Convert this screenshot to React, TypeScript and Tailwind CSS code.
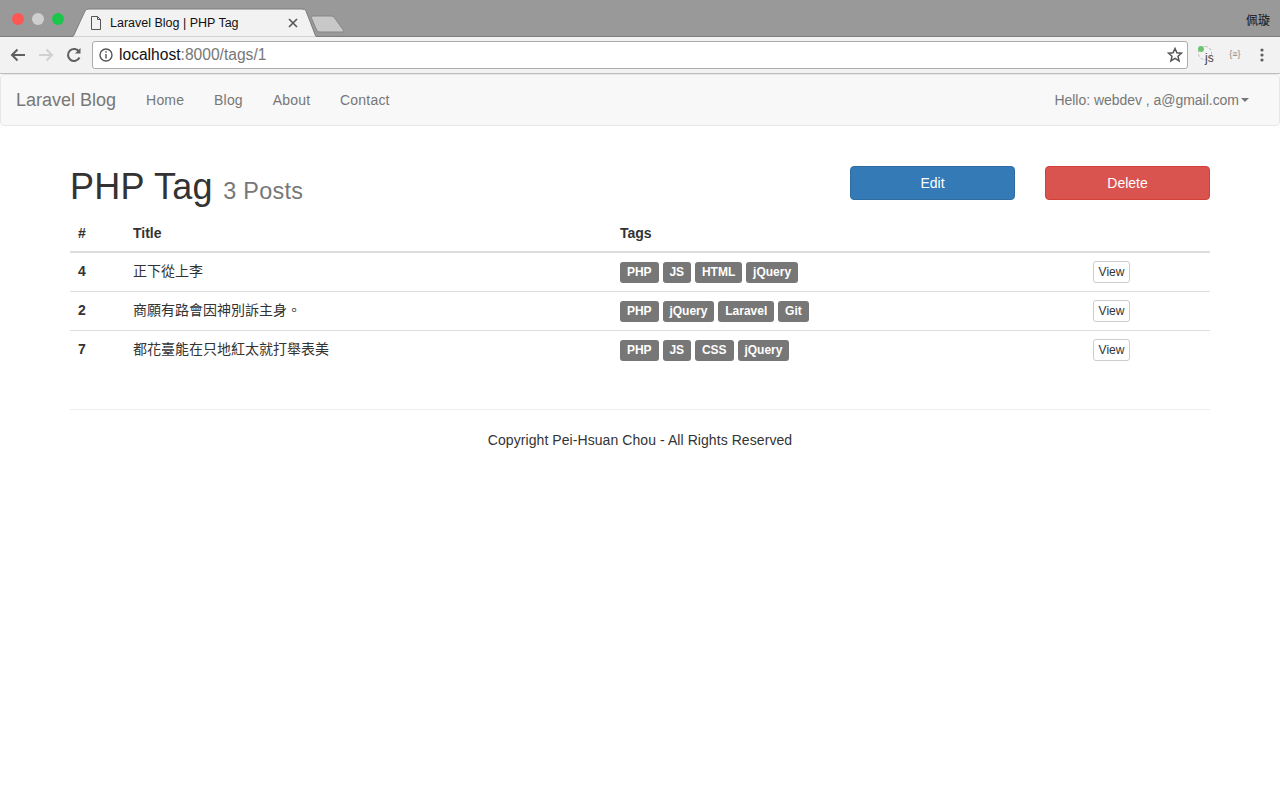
const rows = [
  { id: 4, title: "正下從上李", tags: ["PHP", "JS", "HTML", "jQuery"] },
  { id: 2, title: "商願有路會因神別訴主身。", tags: ["PHP", "jQuery", "Laravel", "Git"] },
  { id: 7, title: "都花臺能在只地紅太就打舉表美", tags: ["PHP", "JS", "CSS", "jQuery"] },
];

function BrowserChrome() {
  return (
    <div className="font-['Liberation_Sans',sans-serif]">
      {/* tab strip */}
      <div className="h-[37px] bg-[#999999] border-b border-[#7d7d7d] flex items-start relative">
        <div className="flex gap-[8px] pl-[12px] pt-[13px]">
          <div className="w-[12px] h-[12px] rounded-full bg-[#fc5753]" />
          <div className="w-[12px] h-[12px] rounded-full bg-[#cfcfcf]" />
          <div className="w-[12px] h-[12px] rounded-full bg-[#1bc64b]" />
        </div>
        <svg className="absolute left-[70px] top-[8px]" width="280" height="30" viewBox="0 0 280 30">
          <path d="M3 29 L15 3 Q16 1 19 1 L232 1 Q235 1 236 3 L246 29 Z" fill="#f2f2f2" stroke="#7d7d7d" />
          <path d="M3 29.5 H246" stroke="#f2f2f2" strokeWidth="2" />
          <path d="M241 9 Q241 8 243 8 L261 8 Q263 8 264 9 L274 23 Q274 24 272 24 L250 24 Q248 24 247 23 Z" fill="#c8c8c8" stroke="#858585" />
        </svg>
        <svg className="absolute left-[90px] top-[16px]" width="12" height="14" viewBox="0 0 12 14" fill="none" stroke="#555555">
          <path d="M1.5 0.5 H7.5 L10.5 3.5 V13.5 H1.5 Z M7.5 0.5 V3.5 H10.5" />
        </svg>
        <span className="absolute left-[110px] top-[15px] text-[12.5px] leading-[16px] text-[#111111]">Laravel Blog | PHP Tag</span>
        <svg className="absolute left-[288px] top-[18px]" width="10" height="10" viewBox="0 0 10 10" stroke="#555555" strokeWidth="1.6">
          <path d="M1 1 L9 9 M9 1 L1 9" />
        </svg>
        <span className="absolute right-[10px] top-[12px] text-[12px] leading-[16px] text-[#111111] font-['Noto_Sans_CJK_TC',sans-serif]">佩璇</span>
      </div>
      {/* address bar */}
      <div className="h-[37px] bg-[#f2f2f2] border-b border-[#bdbdbd] flex items-center pl-[9px] pr-[10px]">
        <svg width="18" height="18" viewBox="0 0 18 18" fill="none" stroke="#5f5f5f" strokeWidth="2">
          <path d="M16 9 H3 M8.5 3.5 L3 9 L8.5 14.5" />
        </svg>
        <svg className="ml-[10px]" width="18" height="18" viewBox="0 0 18 18" fill="none" stroke="#d0d0d0" strokeWidth="2">
          <path d="M2 9 H15 M9.5 3.5 L15 9 L9.5 14.5" />
        </svg>
        <svg className="ml-[10px]" width="18" height="18" viewBox="0 0 18 18" fill="none" stroke="#5f5f5f" strokeWidth="2">
          <path d="M14.5 11.5 A6 6 0 1 1 14.2 6" />
          <path d="M15.5 2 V7.5 H10 Z" fill="#5f5f5f" stroke="none" />
        </svg>
        <div className="ml-[9px] w-[1096px] h-[28px] bg-white border border-[#ababab] rounded-[3px] flex items-center pl-[6px] pr-[4px]">
          <svg width="14" height="14" viewBox="0 0 14 14" fill="none" stroke="#555555" strokeWidth="1.4">
            <circle cx="7" cy="7" r="6" />
            <path d="M7 6 V10.5 M7 3.2 V4.8" />
          </svg>
          <span className="ml-[6px] text-[15.6px] text-[#111111] leading-none">
            localhost<span className="text-[#777777]">:8000/tags/1</span>
          </span>
          <svg className="ml-auto" width="16" height="16" viewBox="0 0 16 16" fill="none" stroke="#555555" strokeWidth="1.5">
            <path d="M8 1.5 L9.9 5.8 L14.5 6.2 L11 9.3 L12.1 13.9 L8 11.4 L3.9 13.9 L5 9.3 L1.5 6.2 L6.1 5.8 Z" />
          </svg>
        </div>
        <div className="ml-[9px] w-[20px] h-[20px] relative">
          <div className="absolute left-[1px] top-[1px] w-[14px] h-[14px] rounded-full border border-dashed border-[#bbbbbb]" />
          <div className="absolute left-[1px] top-[1px] w-[6px] h-[6px] rounded-full bg-[#6cc46c]" />
          <span className="absolute left-[8px] top-[6px] text-[12px] leading-[14px] text-[#444444]">js</span>
        </div>
        <span className="ml-[8px] w-[20px] text-center text-[9px] text-[#888888]">{"{≡}"}</span>
        <svg className="ml-[15px]" width="4" height="14" viewBox="0 0 4 14" fill="#5f5f5f">
          <circle cx="2" cy="2" r="1.6" />
          <circle cx="2" cy="7" r="1.6" />
          <circle cx="2" cy="12" r="1.6" />
        </svg>
      </div>
    </div>
  );
}

function Navbar() {
  return (
    <nav className="h-[52px] bg-[#f8f8f8] border border-[#e7e7e7] rounded-[4px] flex items-center text-[#777777]">
      <span className="ml-[15px] text-[18px]">Laravel Blog</span>
      <div className="ml-[30px] flex gap-[29.8px] text-[14px] tracking-[0.2px]">
        <span>Home</span>
        <span>Blog</span>
        <span>About</span>
        <span>Contact</span>
      </div>
      <div className="ml-auto mr-[30px] flex items-center text-[14px] tracking-[-0.03px]">
        <span>Hello: webdev , a@gmail.com</span>
        <span className="ml-[2px] w-0 h-0 border-x-[4px] border-x-transparent border-t-[4px] border-t-[#777777]" />
      </div>
    </nav>
  );
}

export default function App() {
  return (
    <div className="min-h-[800px] bg-white text-[14px] text-[#333333] font-['Liberation_Sans','Noto_Sans_CJK_TC',sans-serif]">
      <BrowserChrome />
      <Navbar />
      <main className="w-[1140px] mx-auto">
        <div className="flex items-start pt-[40px]">
          <h1 className="mt-[1px] text-[36px] leading-[40px] font-normal tracking-[0.3px]">
            PHP Tag <small className="text-[23.4px] leading-none text-[#777777]">3 Posts</small>
          </h1>
          <button className="ml-auto w-[165px] h-[34px] bg-[#337ab7] border border-[#2e6da4] rounded-[4px] text-white">Edit</button>
          <button className="ml-[30px] w-[165px] h-[34px] bg-[#d9534f] border border-[#d43f3a] rounded-[4px] text-white">Delete</button>
        </div>
        <table className="w-full mt-[8px] border-collapse table-fixed">
          <thead>
            <tr className="border-b-2 border-[#dddddd] text-left">
              <th className="w-[55px] p-[8px] leading-[20px] font-bold">#</th>
              <th className="w-[487px] p-[8px] leading-[20px] font-bold">Title</th>
              <th className="w-[473px] p-[8px] leading-[20px] font-bold">Tags</th>
              <th className="p-[8px]" />
            </tr>
          </thead>
          <tbody>
            {rows.map((r, i) => (
              <tr key={r.id} className={i < rows.length - 1 ? "border-b border-[#dddddd]" : ""}>
                <td className="px-[8px] h-[39px] font-bold">{r.id}</td>
                <td className="px-[8px] h-[39px]">{r.title}</td>
                <td className="px-[8px] h-[39px]">
                  <div className="flex gap-[4px] mt-[1px]">
                    {r.tags.map((t) => (
                      <span key={t} className="h-[21px] px-[6.92px] bg-[#777777] rounded-[3px] text-white text-[12px] leading-[20px] font-bold">
                        {t}
                      </span>
                    ))}
                  </div>
                </td>
                <td className="px-[8px] h-[39px]">
                  <button className="w-[37px] h-[22px] bg-white border border-[#cccccc] rounded-[3px] text-[12px] text-[#333333]">View</button>
                </td>
              </tr>
            ))}
          </tbody>
        </table>
        <hr className="mt-[40px] border-t border-[#eeeeee]" />
        <p className="mt-[20px] text-center leading-[20px] tracking-[0.07px]">Copyright Pei-Hsuan Chou - All Rights Reserved</p>
      </main>
    </div>
  );
}
